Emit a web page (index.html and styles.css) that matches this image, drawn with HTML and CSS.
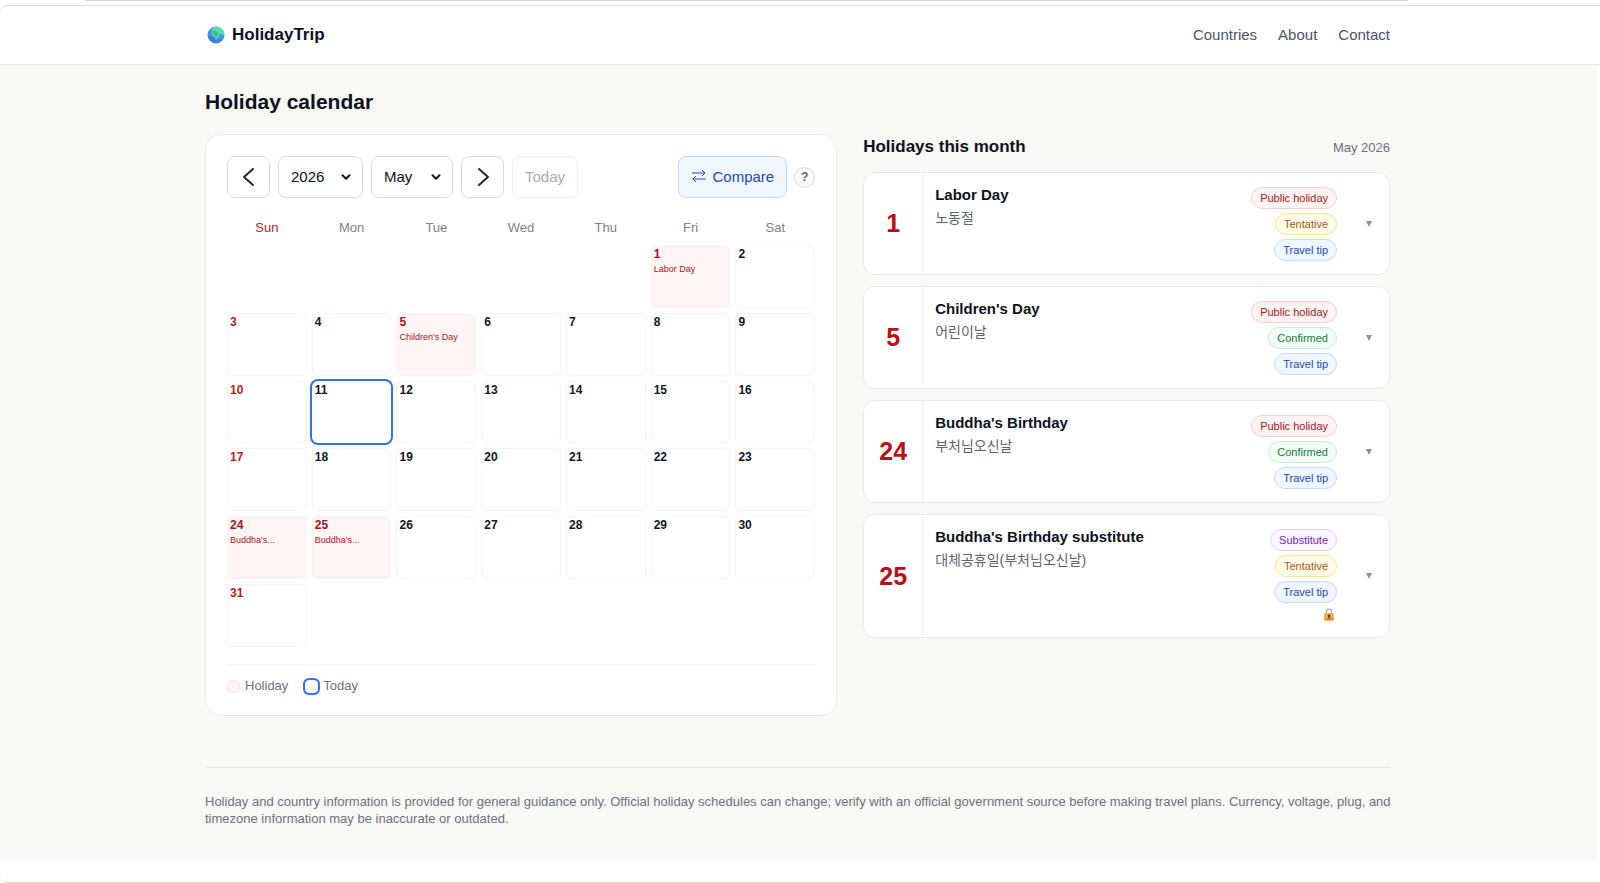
FILE: index.html
```html
<!DOCTYPE html>
<html lang="en">
<head>
<meta charset="utf-8">
<meta name="viewport" content="width=device-width, initial-scale=1">
<title>HolidayTrip – Holiday calendar</title>
<link rel="stylesheet" href="styles.css">
</head>
<body>
<div class="top-edge"></div>
<div class="frame">
  <header class="site-header">
    <div class="container header-row">
      <a class="brand" href="#">
        <svg class="globe" viewBox="0 0 18 18" aria-hidden="true">
          <defs><linearGradient id="sea" x1="0.7" y1="0" x2="0.3" y2="1"><stop offset="0" stop-color="#3fc3ee"/><stop offset="1" stop-color="#3a6fd8"/></linearGradient></defs>
          <circle cx="9" cy="9" r="8.500" fill="url(#sea)"/>
          <path d="M5.500 2 9 .6l4 .9 3 2.700 1.400 3.600-1.400 1.400-1.200-1.800-1.600 1-.9-1-.8 1.200.6 1.600-1.700 2.600-1.800 1-.7-2.600-2-1.200-1.400-2 1-2.300z" fill="#5fdca4"/>
          <path d="M6 4.500 8.500 5l2.500 2-.5 2.200-1.500 2.600-.8-2.200-2.200-1.400z" fill="#45b582"/>
        </svg>
        <span>HolidayTrip</span>
      </a>
      <nav class="nav" aria-label="Main">
        <a href="#countries">Countries</a>
        <a href="#about">About</a>
        <a href="#contact">Contact</a>
      </nav>
    </div>
  </header>

  <div class="page">
    <div class="container">
      <main>
        <h1>Holiday calendar</h1>
        <div class="columns">
          <section class="calendar" aria-label="Calendar">
            <div class="toolbar">
              <button class="control arrow" type="button" aria-label="Previous month"><svg viewBox="0 0 20 20" aria-hidden="true"><path d="M14 2 5 10l9 8"/></svg></button>
              <div class="select-wrap">
                <select class="control year" aria-label="Year"><option>2026</option></select>
                <svg viewBox="0 0 10 10" aria-hidden="true"><path d="m1.500 3.300 3.500 3.400 3.500-3.400"/></svg>
              </div>
              <div class="select-wrap">
                <select class="control month-select" aria-label="Month"><option>May</option></select>
                <svg viewBox="0 0 10 10" aria-hidden="true"><path d="m1.500 3.300 3.500 3.400 3.500-3.400"/></svg>
              </div>
              <button class="control arrow" type="button" aria-label="Next month"><svg viewBox="0 0 20 20" aria-hidden="true"><path d="m6 2 9 8-9 8"/></svg></button>
              <button class="control today-button" type="button" disabled>Today</button>
              <div class="tools">
                <button class="control compare" type="button"><svg viewBox="0 0 16 14" aria-hidden="true"><path d="M1 4h13M11 1l3 3-3 3M15 10H2M5 7l-3 3 3 3"/></svg>Compare</button>
                <button class="help" type="button" aria-label="Help">?</button>
              </div>
            </div>
            <div class="weekdays">
              <span class="sun">Sun</span><span>Mon</span><span>Tue</span><span>Wed</span><span>Thu</span><span>Fri</span><span>Sat</span>
            </div>
            <div class="days">
              <div class="day first holiday"><b>1</b><span>Labor Day</span></div>
              <div class="day"><b>2</b></div>
              <div class="day sun"><b>3</b></div>
              <div class="day"><b>4</b></div>
              <div class="day holiday"><b>5</b><span>Children's Day</span></div>
              <div class="day"><b>6</b></div>
              <div class="day"><b>7</b></div>
              <div class="day"><b>8</b></div>
              <div class="day"><b>9</b></div>
              <div class="day sun"><b>10</b></div>
              <div class="day today"><b>11</b></div>
              <div class="day"><b>12</b></div>
              <div class="day"><b>13</b></div>
              <div class="day"><b>14</b></div>
              <div class="day"><b>15</b></div>
              <div class="day"><b>16</b></div>
              <div class="day sun"><b>17</b></div>
              <div class="day"><b>18</b></div>
              <div class="day"><b>19</b></div>
              <div class="day"><b>20</b></div>
              <div class="day"><b>21</b></div>
              <div class="day"><b>22</b></div>
              <div class="day"><b>23</b></div>
              <div class="day holiday"><b>24</b><span>Buddha's...</span></div>
              <div class="day holiday"><b>25</b><span>Buddha's...</span></div>
              <div class="day"><b>26</b></div>
              <div class="day"><b>27</b></div>
              <div class="day"><b>28</b></div>
              <div class="day"><b>29</b></div>
              <div class="day"><b>30</b></div>
              <div class="day sun"><b>31</b></div>
            </div>
            <div class="legend">
              <span class="key"><i class="swatch"></i>Holiday</span>
              <span class="key"><i class="swatch swatch-today"></i>Today</span>
            </div>
          </section>

          <section aria-labelledby="month-title">
            <div class="month-head">
              <h2 id="month-title">Holidays this month</h2>
              <span>May 2026</span>
            </div>
            <div class="cards">
              <article class="card">
                <div class="date">1</div>
                <div class="names"><h3>Labor Day</h3><p lang="ko">노동절</p></div>
                <div class="pills"><span class="pill red">Public holiday</span><span class="pill amber">Tentative</span><span class="pill blue">Travel tip</span></div>
                <button class="expand" type="button" aria-label="Show details for Labor Day"><svg viewBox="0 0 6 6" aria-hidden="true"><path d="M0 0h6L3 6z"/></svg></button>
              </article>
              <article class="card">
                <div class="date">5</div>
                <div class="names"><h3>Children's Day</h3><p lang="ko">어린이날</p></div>
                <div class="pills"><span class="pill red">Public holiday</span><span class="pill green">Confirmed</span><span class="pill blue">Travel tip</span></div>
                <button class="expand" type="button" aria-label="Show details for Children's Day"><svg viewBox="0 0 6 6" aria-hidden="true"><path d="M0 0h6L3 6z"/></svg></button>
              </article>
              <article class="card">
                <div class="date">24</div>
                <div class="names"><h3>Buddha's Birthday</h3><p lang="ko">부처님오신날</p></div>
                <div class="pills"><span class="pill red">Public holiday</span><span class="pill green">Confirmed</span><span class="pill blue">Travel tip</span></div>
                <button class="expand" type="button" aria-label="Show details for Buddha's Birthday"><svg viewBox="0 0 6 6" aria-hidden="true"><path d="M0 0h6L3 6z"/></svg></button>
              </article>
              <article class="card">
                <div class="date">25</div>
                <div class="names"><h3>Buddha's Birthday substitute</h3><p lang="ko">대체공휴일(부처님오신날)</p></div>
                <div class="pills"><span class="pill purple">Substitute</span><span class="pill amber">Tentative</span><span class="pill blue">Travel tip</span>
                  <svg class="lock" viewBox="0 0 10 13" role="img" aria-label="Locked"><path d="M2.500 6V3.500a2.500 2.500 0 0 1 5 0V6" fill="none" stroke="#a3a7b0" stroke-width="1.200"/><rect x=".3" y="5" width="9.400" height="7.500" rx="1" fill="#f5a742"/><path d="M.3 10h9.400v1.500a1 1 0 0 1-1 1H1.300a1 1 0 0 1-1-1z" fill="#ef8b3c"/><circle cx="5" cy="7.800" r="1.200" fill="#4b3a35"/><path d="M4.500 8h1l.2 2.800H4.300z" fill="#4b3a35"/></svg>
                </div>
                <button class="expand" type="button" aria-label="Show details for Buddha's Birthday substitute"><svg viewBox="0 0 6 6" aria-hidden="true"><path d="M0 0h6L3 6z"/></svg></button>
              </article>
            </div>
          </section>
        </div>
      </main>
      <footer class="site-footer">
        <p>Holiday and country information is provided for general guidance only. Official holiday schedules can change; verify with an official government source before making travel plans. Currency, voltage, plug, and timezone information may be inaccurate or outdated.</p>
      </footer>
    </div>
  </div>
</div>
</body>
</html>
```
FILE: styles.css
```css
* { box-sizing: border-box; }

body {
  margin: 0;
  min-height: 100vh;
  display: flex;
  flex-direction: column;
  background: #fff;
  color: #0f172a;
  font-family: "Liberation Sans", "Noto Sans CJK KR", Arial, sans-serif;
  font-size: 15px;
}

h1, h2, h3, p { margin: 0; }
a { color: inherit; text-decoration: none; }
button, select { font: inherit; color: inherit; }

/* Window edges */
.top-edge {
  height: 1px;
  margin: 0 12% 4px 85px;
  background: #d6d6d6;
}

.frame {
  flex: 1;
  border: solid #dcdcde;
  border-width: 1px 0;
  border-radius: 8px 0 0 8px;
  padding-bottom: 21px;
  overflow: hidden;
}

.container {
  max-width: 1185px;
  margin: 0 auto;
}

/* Header */
.site-header {
  border-bottom: 1px solid #e8e8ea;
  padding-right: 5px;
}

.header-row {
  display: flex;
  align-items: center;
  justify-content: space-between;
  height: 58px;
}

.brand {
  display: flex;
  align-items: center;
  gap: 7px;
  padding-left: 2px;
  font-size: 17px;
  font-weight: 700;
  color: #0b1220;
}

.globe { width: 18px; height: 18px; }

.nav {
  display: flex;
  gap: 21px;
  padding-bottom: 2px;
  color: #4b5563;
}

/* Page body */
.page {
  margin-right: 3px;
  padding-right: 2px;
  background: #f9f8f4;
}

h1 {
  padding-top: 25px;
  font-size: 21px;
  line-height: 24px;
  color: #0b1220;
}

.columns {
  display: grid;
  grid-template-columns: 6fr 5fr;
  gap: 26px;
  align-items: start;
  padding-top: 20px;
}

.calendar {
  padding: 21px;
  background: #fff;
  border: 1px solid #e8eaed;
  border-radius: 16px;
}

.toolbar {
  display: flex;
  align-items: center;
  gap: 8px;
}

.control {
  height: 42px;
  margin: 0;
  background: #fff;
  border: 1px solid #d8dce1;
  border-radius: 8px;
}

.arrow {
  display: grid;
  place-items: center;
  width: 43px;
  padding: 0;
}

.arrow svg {
  width: 20px;
  height: 20px;
  fill: none;
  stroke: #1f2937;
  stroke-width: 2;
  stroke-linecap: round;
  stroke-linejoin: round;
}

.select-wrap { position: relative; }

.select-wrap select {
  appearance: none;
  padding: 0 12px 2px;
  color: #0b1220;
}

.select-wrap svg {
  position: absolute;
  right: 12px;
  top: 16px;
  width: 10px;
  height: 10px;
  fill: none;
  stroke: #111827;
  stroke-width: 2;
  stroke-linecap: round;
  stroke-linejoin: round;
  pointer-events: none;
}

.year { width: 85px; }
.month-select { width: 82px; }

.today-button {
  padding: 0 12px 2px;
  color: #a8abaf;
  border-color: #eef0f2;
}

.tools {
  display: flex;
  align-items: center;
  gap: 7px;
  margin-left: auto;
}

.compare {
  display: flex;
  align-items: center;
  gap: 5px;
  padding: 0 12px 2px;
  color: #2446b8;
  background: #eff6ff;
  border-color: #bfdbf5;
}

.compare svg {
  width: 16px;
  height: 14px;
  fill: none;
  stroke: currentColor;
}

.help {
  width: 21px;
  height: 21px;
  padding: 0;
  font-size: 12px;
  font-weight: 700;
  line-height: 19px;
  color: #5b6470;
  background: #f9fafb;
  border: 1px solid #d5d9de;
  border-radius: 50%;
}

.weekdays {
  display: grid;
  grid-template-columns: repeat(7, 1fr);
  gap: 5px;
  padding: 22px 0 9px;
  font-size: 13px;
  line-height: 16px;
  text-align: center;
  color: #7b828c;
}

.weekdays .sun { color: #b91c1c; }

.days {
  display: grid;
  grid-template-columns: repeat(7, 1fr);
  grid-auto-rows: 1fr;
  gap: 5px;
  min-height: 402px;
}

.day {
  padding: 1px 2px;
  border: 1px solid #f3f4f5;
  border-radius: 6px;
  font-size: 12px;
  line-height: 15px;
}

.day b { display: block; }

.day span {
  display: block;
  font-size: 9px;
  line-height: 14px;
  white-space: nowrap;
}

.day.first { grid-column-start: 6; }
.day.sun { color: #b91c1c; }

.day.holiday {
  color: #a3161c;
  background: #fef4f4;
  border-color: #fcefef;
}

.day.today {
  border-color: transparent;
  box-shadow: 0 0 0 2px #2f74e0;
}

.legend {
  display: flex;
  gap: 17px;
  margin-top: 17px;
  padding-top: 13px;
  border-top: 1px solid #f3f4f6;
  font-size: 13px;
  line-height: 16px;
  color: #6b7280;
}

.key {
  display: flex;
  align-items: center;
  gap: 5px;
}

.swatch {
  width: 13px;
  height: 13px;
  background: #fef2f2;
  border: 1px solid #fae3e3;
  border-radius: 4px;
}

.swatch-today {
  background: #fff;
  border-color: #fff;
  box-shadow: 0 0 0 2px #2f74e0;
}

/* Holidays list */
.month-head {
  display: flex;
  align-items: baseline;
  justify-content: space-between;
  padding: 3px 0 14px;
  font-size: 13px;
  line-height: 20px;
  color: #6b7280;
}

h2 {
  font-size: 17px;
  line-height: 20px;
  color: #0b1220;
}

.cards {
  display: grid;
  gap: 11px;
}

.card {
  display: flex;
  background: #fff;
  border: 1px solid #e8eaed;
  border-radius: 12px;
}

.date {
  display: grid;
  place-items: center;
  width: 59px;
  border-right: 1px solid #f1f2f4;
  font-size: 25px;
  font-weight: 700;
  color: #b91015;
}

.names {
  flex: 1;
  padding: 12px;
}

h3 {
  font-size: 15px;
  line-height: 20px;
  color: #0b1220;
}

.names p {
  padding-top: 3px;
  font-size: 14px;
  line-height: 20px;
  color: #5b6470;
}

.pills {
  display: flex;
  flex-direction: column;
  align-items: flex-end;
  gap: 4px;
  padding: 14px 0 13px;
}

.pill {
  padding: 0 8px;
  border: 1px solid;
  border-radius: 11px;
  font-size: 11px;
  line-height: 20px;
}

.red { color: #9b1c24; background: #fef2f2; border-color: #f8cfcf; }
.amber { color: #a35a12; background: #fffbe8; border-color: #f8e596; }
.blue { color: #2449ab; background: #eff6ff; border-color: #c3dcf8; }
.green { color: #1b7840; background: #f0fdf4; border-color: #c3f1d2; }
.purple { color: #7a1fa8; background: #faf5ff; border-color: #e8d2fb; }

.lock {
  width: 10px;
  height: 13px;
  margin: 1px 3px 3px 0;
}

.expand {
  display: grid;
  place-items: center;
  width: 52px;
  padding: 0 0 0 12px;
  background: none;
  border: 0;
}

.expand svg {
  width: 6px;
  height: 6px;
  fill: #8b919b;
}

/* Footer */
.site-footer {
  margin-top: 51px;
  padding: 25px 0 33px;
  border-top: 1px solid #e8e7e3;
  font-size: 13px;
  line-height: 17px;
  color: #6b7280;
}

.site-footer p { margin-right: -12px; }
```
